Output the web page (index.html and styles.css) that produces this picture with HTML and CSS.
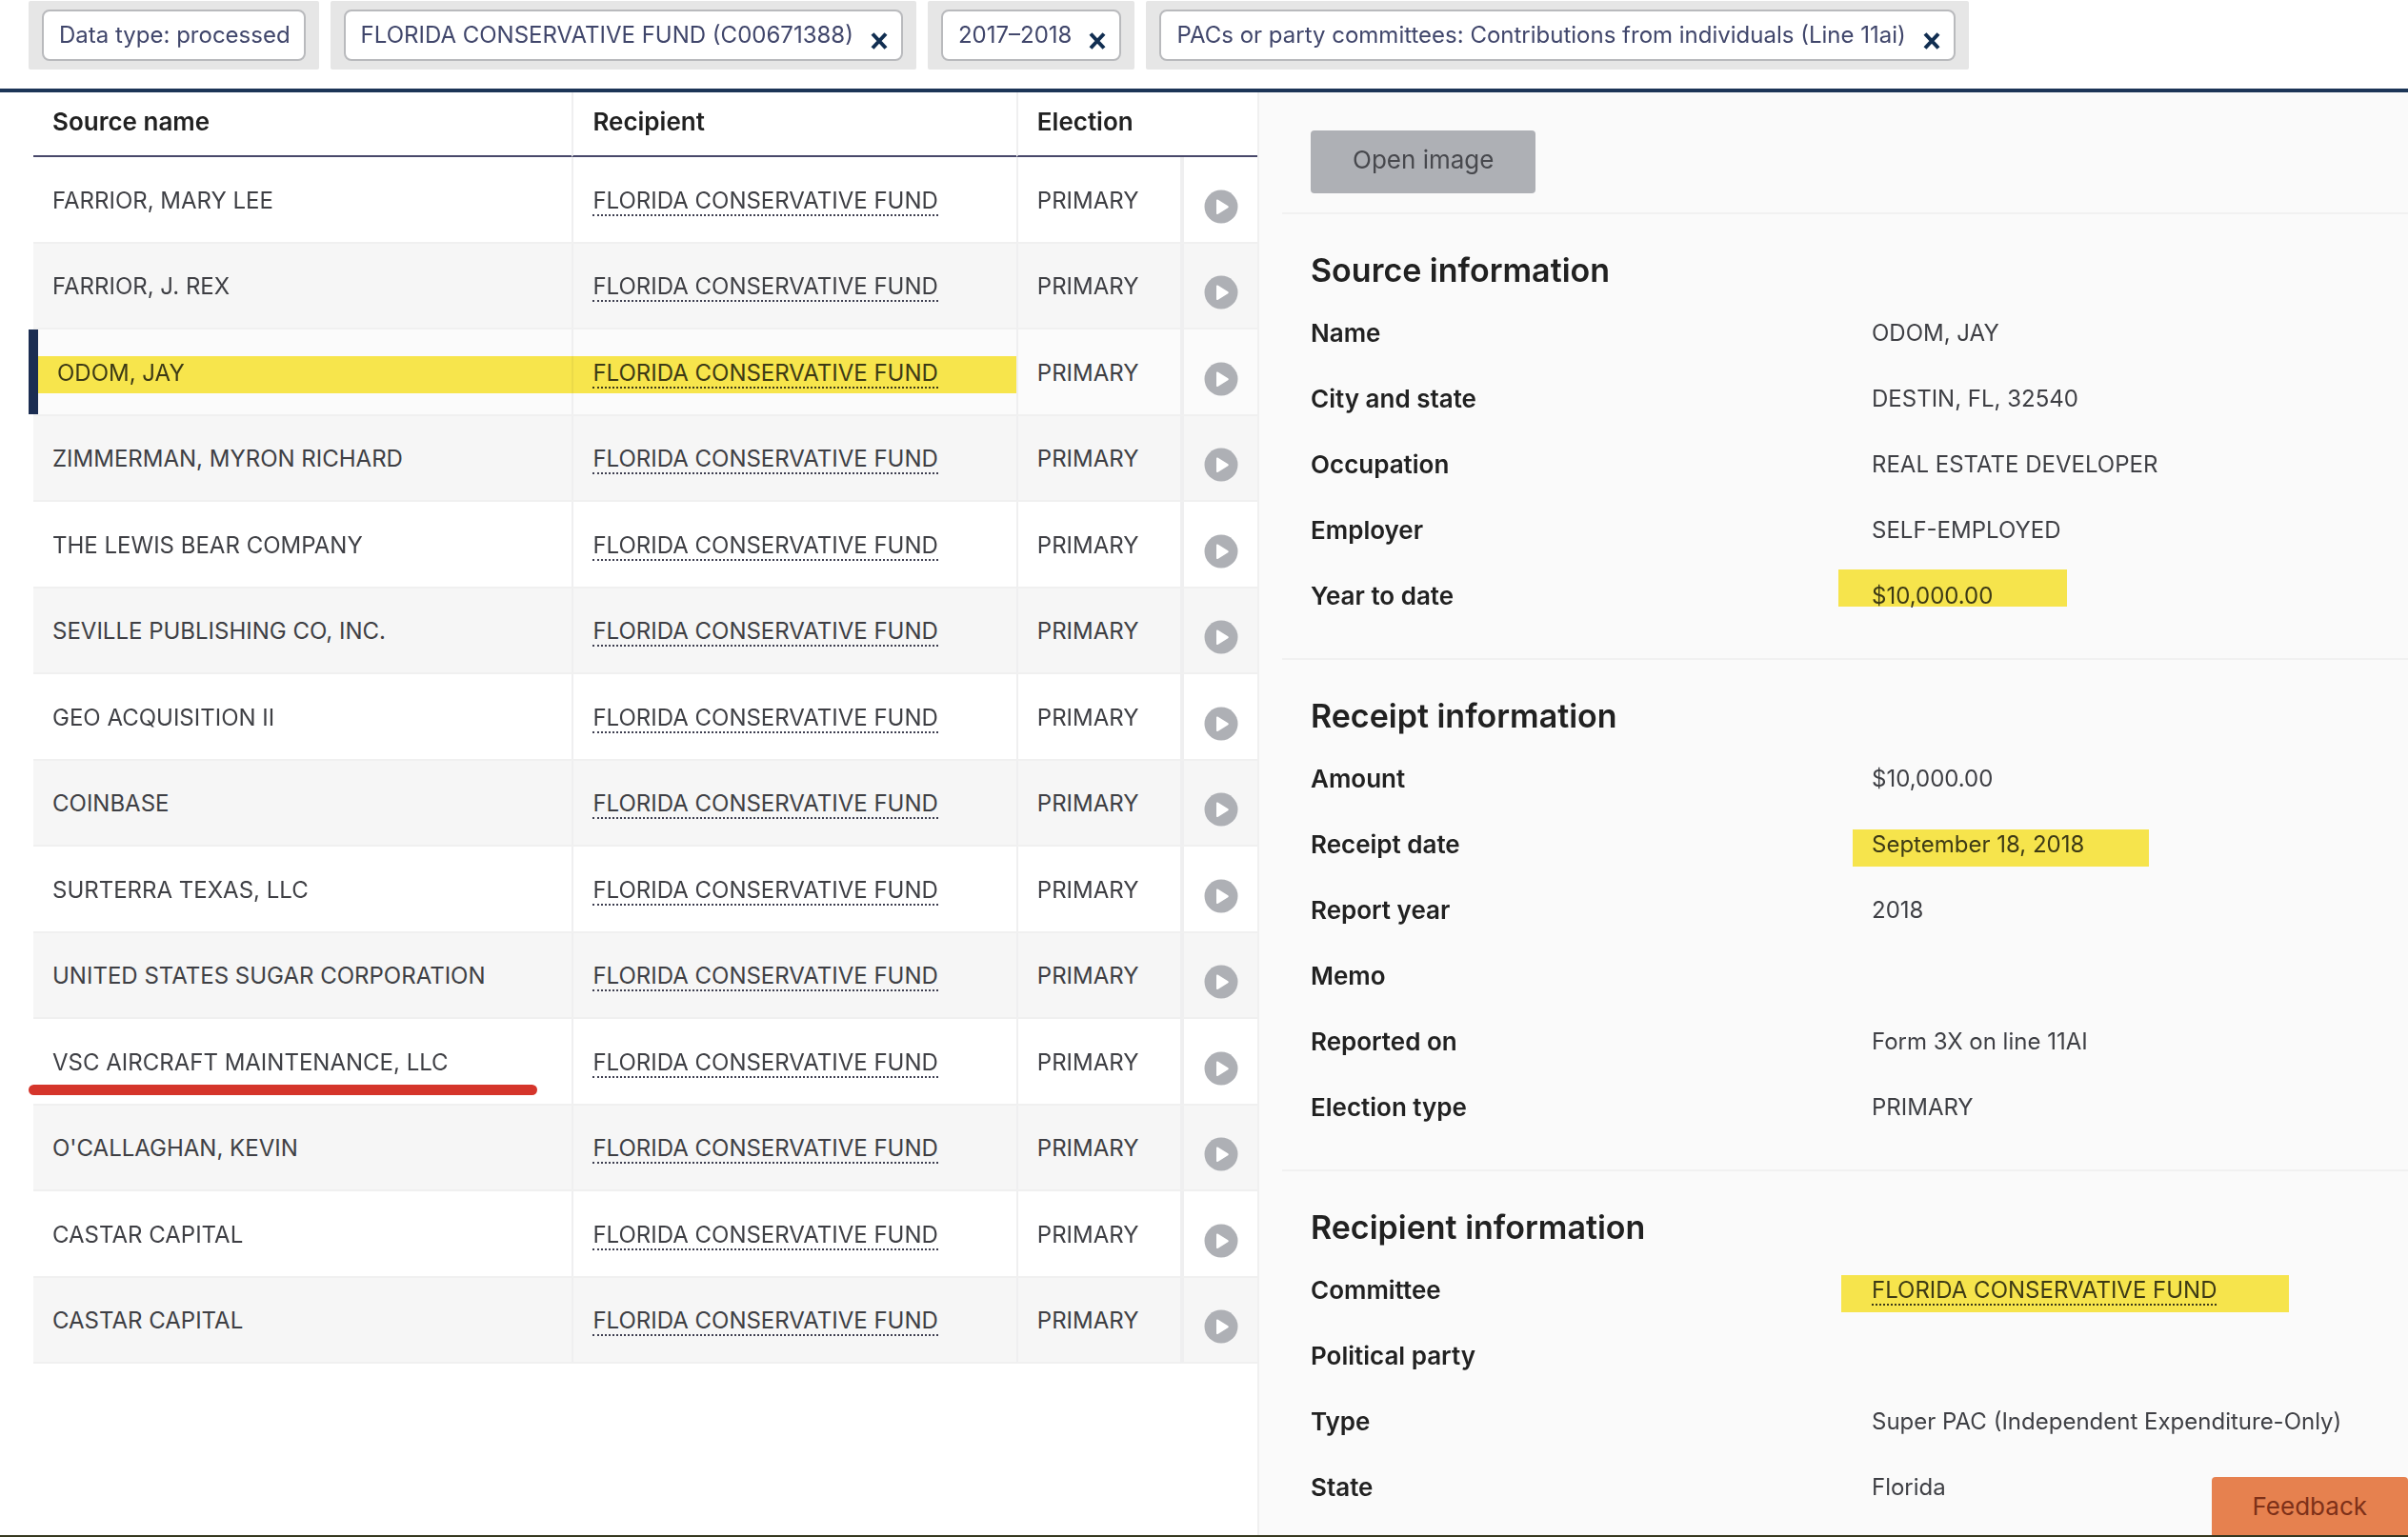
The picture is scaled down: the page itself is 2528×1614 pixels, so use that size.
FILE: index.html
```
<!DOCTYPE html>
<html lang="en">
<head>
    <meta charset="UTF-8">
    <meta name="viewport" content="width=device-width, initial-scale=1.0">
    <title>Receipts</title>
    <link rel="stylesheet" href="styles.css">
</head>
<body>
    <svg class="defs" aria-hidden="true">
        <symbol id="play" viewBox="0 0 36 36">
            <circle cx="18" cy="18" r="17.5" fill="#aeb0b5"/>
            <path d="M13 11.5v13.5c0 1 1 1.300 1.800.8l10.400-6.500c.8-.5.8-1.500 0-2l-10.400-6.500c-.8-.5-1.800-.2-1.800.7z" fill="#fff"/>
        </symbol>
        <symbol id="close" viewBox="0 0 18 18">
            <path d="M2 1.500L16 16.500M16 1.500L2 16.500" stroke="#112e51" stroke-width="4" fill="none"/>
        </symbol>
    </svg>

    <div class="filters">
        <div class="tag-group"><div class="tag">Data type: processed</div></div>
        <div class="tag-group"><div class="tag">FLORIDA CONSERVATIVE FUND (C00671388)
            <button type="button" class="tag-close" aria-label="Remove committee"><svg><use href="#close"/></svg></button></div></div>
        <div class="tag-group"><div class="tag">2017–2018
            <button type="button" class="tag-close" aria-label="Remove period"><svg><use href="#close"/></svg></button></div></div>
        <div class="tag-group"><div class="tag">PACs or party committees: Contributions from individuals (Line 11ai)
            <button type="button" class="tag-close" aria-label="Remove line number"><svg><use href="#close"/></svg></button></div></div>
    </div>

    <main>
        <div class="results">
            <table>
                <thead>
                    <tr>
                        <th class="col-source">Source name</th>
                        <th class="col-recipient">Recipient</th>
                        <th class="col-election">Election</th>
                        <th class="col-open"></th>
                    </tr>
                </thead>
                <tbody>
                    <tr>
                        <td>FARRIOR, MARY LEE</td>
                        <td><a href="#">FLORIDA CONSERVATIVE FUND</a></td>
                        <td>PRIMARY</td>
                        <td><button type="button" class="open" aria-label="Details"><svg><use href="#play"/></svg></button></td>
                    </tr>
                    <tr>
                        <td>FARRIOR, J. REX</td>
                        <td><a href="#">FLORIDA CONSERVATIVE FUND</a></td>
                        <td>PRIMARY</td>
                        <td><button type="button" class="open" aria-label="Details"><svg><use href="#play"/></svg></button></td>
                    </tr>
                    <tr class="active">
                        <td>ODOM, JAY</td>
                        <td><a href="#">FLORIDA CONSERVATIVE FUND</a></td>
                        <td>PRIMARY</td>
                        <td><button type="button" class="open" aria-label="Details"><svg><use href="#play"/></svg></button></td>
                    </tr>
                    <tr>
                        <td>ZIMMERMAN, MYRON RICHARD</td>
                        <td><a href="#">FLORIDA CONSERVATIVE FUND</a></td>
                        <td>PRIMARY</td>
                        <td><button type="button" class="open" aria-label="Details"><svg><use href="#play"/></svg></button></td>
                    </tr>
                    <tr>
                        <td>THE LEWIS BEAR COMPANY</td>
                        <td><a href="#">FLORIDA CONSERVATIVE FUND</a></td>
                        <td>PRIMARY</td>
                        <td><button type="button" class="open" aria-label="Details"><svg><use href="#play"/></svg></button></td>
                    </tr>
                    <tr>
                        <td>SEVILLE PUBLISHING CO, INC.</td>
                        <td><a href="#">FLORIDA CONSERVATIVE FUND</a></td>
                        <td>PRIMARY</td>
                        <td><button type="button" class="open" aria-label="Details"><svg><use href="#play"/></svg></button></td>
                    </tr>
                    <tr>
                        <td>GEO ACQUISITION II</td>
                        <td><a href="#">FLORIDA CONSERVATIVE FUND</a></td>
                        <td>PRIMARY</td>
                        <td><button type="button" class="open" aria-label="Details"><svg><use href="#play"/></svg></button></td>
                    </tr>
                    <tr>
                        <td>COINBASE</td>
                        <td><a href="#">FLORIDA CONSERVATIVE FUND</a></td>
                        <td>PRIMARY</td>
                        <td><button type="button" class="open" aria-label="Details"><svg><use href="#play"/></svg></button></td>
                    </tr>
                    <tr>
                        <td>SURTERRA TEXAS, LLC</td>
                        <td><a href="#">FLORIDA CONSERVATIVE FUND</a></td>
                        <td>PRIMARY</td>
                        <td><button type="button" class="open" aria-label="Details"><svg><use href="#play"/></svg></button></td>
                    </tr>
                    <tr>
                        <td>UNITED STATES SUGAR CORPORATION</td>
                        <td><a href="#">FLORIDA CONSERVATIVE FUND</a></td>
                        <td>PRIMARY</td>
                        <td><button type="button" class="open" aria-label="Details"><svg><use href="#play"/></svg></button></td>
                    </tr>
                    <tr class="underlined">
                        <td>VSC AIRCRAFT MAINTENANCE, LLC</td>
                        <td><a href="#">FLORIDA CONSERVATIVE FUND</a></td>
                        <td>PRIMARY</td>
                        <td><button type="button" class="open" aria-label="Details"><svg><use href="#play"/></svg></button></td>
                    </tr>
                    <tr>
                        <td>O'CALLAGHAN, KEVIN</td>
                        <td><a href="#">FLORIDA CONSERVATIVE FUND</a></td>
                        <td>PRIMARY</td>
                        <td><button type="button" class="open" aria-label="Details"><svg><use href="#play"/></svg></button></td>
                    </tr>
                    <tr>
                        <td>CASTAR CAPITAL</td>
                        <td><a href="#">FLORIDA CONSERVATIVE FUND</a></td>
                        <td>PRIMARY</td>
                        <td><button type="button" class="open" aria-label="Details"><svg><use href="#play"/></svg></button></td>
                    </tr>
                    <tr>
                        <td>CASTAR CAPITAL</td>
                        <td><a href="#">FLORIDA CONSERVATIVE FUND</a></td>
                        <td>PRIMARY</td>
                        <td><button type="button" class="open" aria-label="Details"><svg><use href="#play"/></svg></button></td>
                    </tr>
                </tbody>
            </table>
        </div>

        <aside class="panel">
            <div class="panel-top">
                <button type="button" class="open-image">Open image</button>
            </div>
            <section>
                <h2>Source information</h2>
                <dl>
                    <dt>Name</dt><dd>ODOM, JAY</dd>
                    <dt>City and state</dt><dd>DESTIN, FL, 32540</dd>
                    <dt>Occupation</dt><dd>REAL ESTATE DEVELOPER</dd>
                    <dt>Employer</dt><dd>SELF-EMPLOYED</dd>
                    <dt>Year to date</dt><dd class="marked mark-total">$10,000.00</dd>
                </dl>
            </section>
            <section>
                <h2>Receipt information</h2>
                <dl>
                    <dt>Amount</dt><dd>$10,000.00</dd>
                    <dt>Receipt date</dt><dd class="marked mark-date">September 18, 2018</dd>
                    <dt>Report year</dt><dd>2018</dd>
                    <dt>Memo</dt><dd></dd>
                    <dt>Reported on</dt><dd>Form 3X on line 11AI</dd>
                    <dt>Election type</dt><dd>PRIMARY</dd>
                </dl>
            </section>
            <section>
                <h2>Recipient information</h2>
                <dl>
                    <dt>Committee</dt><dd class="marked mark-committee"><a href="#">FLORIDA CONSERVATIVE FUND</a></dd>
                    <dt>Political party</dt><dd></dd>
                    <dt>Type</dt><dd>Super PAC (Independent Expenditure-Only)</dd>
                    <dt>State</dt><dd>Florida</dd>
                </dl>
            </section>
        </aside>
    </main>

    <button type="button" class="feedback">Feedback</button>
</body>
</html>
```
FILE: styles.css
```
* {
    box-sizing: border-box;
}

body {
    margin: 0;
    min-height: 100vh;
    display: flex;
    flex-direction: column;
    font-family: Inter, Roboto, sans-serif;
    font-size: 24px;
    line-height: 32px;
    color: #3e3f44;
    background: #fff;
    border-bottom: 2px solid #36381f;
}

button {
    font: inherit;
    border: 0;
    cursor: pointer;
}

a {
    color: inherit;
    text-decoration: none;
    border-bottom: 2px dotted #3e3f50;
}

.defs {
    position: absolute;
    width: 0;
    height: 0;
}

/* Filter tags */
.filters {
    display: flex;
    gap: 12px;
    padding: 1px 30px 20px;
    border-bottom: 4px solid #1c3557;
}

.tag-group {
    padding: 9px 14px;
    background: #e6e6e6;
    border-radius: 2px;
}

.tag {
    display: flex;
    align-items: center;
    gap: 18px;
    height: 54px;
    padding: 0 14px 0 16px;
    color: #40466b;
    background: #fff;
    border: 2px solid #b9babd;
    border-radius: 8px;
    white-space: nowrap;
}

.tag-close {
    display: flex;
    padding: 12px 0 0;
    background: none;
}

.tag-close svg {
    width: 18px;
    height: 18px;
}

main {
    flex: 1;
    display: grid;
    grid-template-columns: 1320fr 1208fr;
}

/* Results table */
.results {
    padding-left: 35px;
}

table {
    width: 100%;
    table-layout: fixed;
    border-collapse: separate;
    border-spacing: 0;
}

.col-source {
    width: 44%;
}

.col-recipient {
    width: 36.3%;
}

.col-election {
    width: 13.4%;
}

th {
    height: 68px;
    padding: 0 20px 4px;
    text-align: left;
    font-size: 26px;
    font-weight: 600;
    color: #212121;
    border-bottom: 2px solid #48486a;
}

td {
    position: relative;
    height: 91px;
    padding: 2px 20px 0;
    border-bottom: 2px solid #f0f0f0;
}

th + th,
td + td {
    border-left: 2px solid #efeff0;
}

th.col-open {
    border-left: 0;
}

tbody tr:nth-child(even) td {
    height: 90px;
    background: #f6f6f6;
}

td:last-child {
    padding: 14px 0 0;
    border-left-width: 4px;
}

.open {
    display: block;
    margin: 0 auto;
    padding: 0;
    background: none;
}

.open svg {
    display: block;
    width: 36px;
    height: 36px;
}

.active td {
    background: #fbfbfb;
}

.active td:first-child {
    padding-left: 25px;
}

.active td:first-child::before {
    content: "";
    position: absolute;
    top: 0;
    bottom: 0;
    left: -5px;
    width: 10px;
    background: #1b2d52;
}

/* Highlighter strokes, text stays readable through them */
.active td:nth-child(-n+2)::after,
.marked::after {
    content: "";
    position: absolute;
    height: 39px;
    background: #fbe94d;
    mix-blend-mode: multiply;
}

.active td:nth-child(-n+2)::after {
    top: 28px;
    left: -2px;
    right: 0;
}

.active td:first-child::after {
    left: 5px;
}

.underlined td:first-child::after {
    content: "";
    position: absolute;
    left: -5px;
    right: 36px;
    bottom: 9px;
    height: 11px;
    background: #d5352b;
    border-radius: 6px;
}

/* Detail panel */
.panel {
    background: #fafafa;
    border-left: 2px solid #f0f0f0;
    padding-left: 24px;
}

.panel-top {
    padding: 40px 30px 20px;
}

.open-image {
    height: 66px;
    padding: 0 44px 4px;
    font-size: 26px;
    color: #47484d;
    background: #aeb0b5;
    border-radius: 4px;
}

section {
    padding: 39px 0 31px 30px;
    border-top: 2px solid #f1f1f1;
}

section:last-child {
    padding-bottom: 0;
}

h2 {
    margin: 0 0 11px;
    font-size: 34px;
    line-height: 40px;
    font-weight: 600;
    color: #212121;
}

dl {
    display: grid;
    grid-template-columns: 589fr 563fr;
    grid-auto-rows: 69px;
    align-items: center;
    margin: 0;
}

dt {
    font-size: 26px;
    font-weight: 600;
    color: #212121;
}

dd {
    position: relative;
    margin: 0;
    white-space: nowrap;
}

.mark-total::after {
    left: -35px;
    top: -12px;
    width: 240px;
}

.mark-date::after {
    left: -20px;
    top: 0;
    width: 311px;
}

.mark-committee::after {
    left: -32px;
    top: 0;
    width: 470px;
}

.feedback {
    position: fixed;
    right: 0;
    bottom: 2px;
    height: 61px;
    padding: 0 43px;
    font-size: 26px;
    color: #7d3018;
    background: #e6814f;
    border-radius: 4px 4px 0 0;
}
```
